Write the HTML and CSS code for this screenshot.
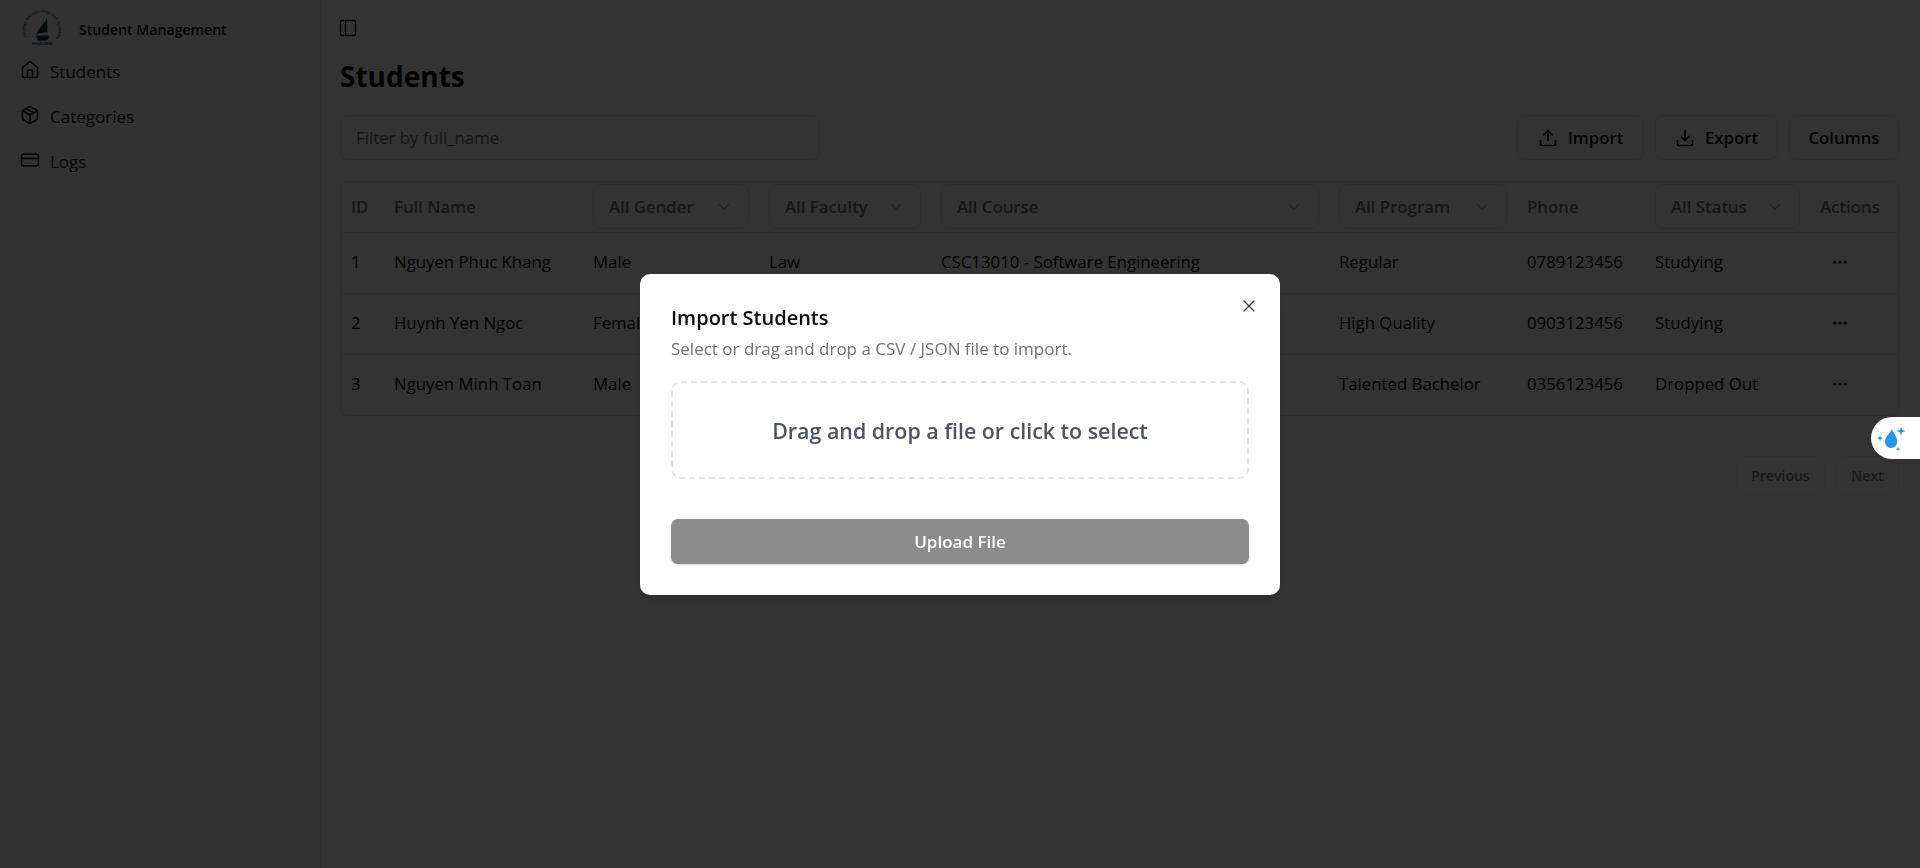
FILE: index.html
```html
<!DOCTYPE html>
<html lang="en">
<head>
<meta charset="utf-8">
<title>Student Management</title>
<link rel="stylesheet" href="styles.css">
</head>
<body>
<div class="app">
  <aside class="sidebar">
    <div class="brand">
      <svg class="logo" viewBox="0 0 44 44">
        <defs><path id="ring" d="M7.700 30.500A16.500 16.500 0 1 1 36.300 30.500"/></defs>
        <text class="logo-ring"><textPath href="#ring" startOffset="1">TRƯỜNG ĐẠI HỌC KHOA HỌC TỰ NHIÊN</textPath></text>
        <text class="logo-base" x="22" y="38" text-anchor="middle">ĐHQG-HCM</text>
        <path class="logo-sail" d="M27 11 L27.500 26 C24 25 20 26 16 27.500 C19 21 24 17 27 11Z"/>
        <path class="logo-sail" d="M16 28.500H28.500C29 31 28 33.500 26 33.500H18C17 32 16.500 30 16 28.500Z"/>
      </svg>
      <span class="brand-name">Student Management</span>
    </div>
    <nav class="nav">
      <a class="nav-item">
        <svg class="ico nav-ico" viewBox="0 0 24 24"><path d="M15 21v-8a1 1 0 0 0-1-1h-4a1 1 0 0 0-1 1v8"/><path d="M3 10a2 2 0 0 1 .709-1.528l7-5.999a2 2 0 0 1 2.582 0l7 5.999A2 2 0 0 1 21 10v9a2 2 0 0 1-2 2H5a2 2 0 0 1-2-2z"/></svg>
        Students
      </a>
      <a class="nav-item">
        <svg class="ico nav-ico" viewBox="0 0 24 24"><path d="M11 21.730a2 2 0 0 0 2 0l7-4A2 2 0 0 0 21 16V8a2 2 0 0 0-1-1.730l-7-4a2 2 0 0 0-2 0l-7 4A2 2 0 0 0 3 8v8a2 2 0 0 0 1 1.730z"/><path d="M12 22V12"/><polyline points="3.290 7 12 12 20.710 7"/><path d="m7.500 4.270 9 5.150"/></svg>
        Categories
      </a>
      <a class="nav-item">
        <svg class="ico nav-ico" viewBox="0 0 24 24"><rect width="20" height="14" x="2" y="5" rx="2"/><line x1="2" x2="22" y1="10" y2="10"/></svg>
        Logs
      </a>
    </nav>
  </aside>

  <main class="main">
    <div class="topbar">
      <svg class="ico trigger" viewBox="0 0 24 24"><rect width="18" height="18" x="3" y="3" rx="2"/><path d="M9 3v18"/></svg>
    </div>
    <h1 class="title">Students</h1>

    <div class="toolbar">
      <div class="filter">Filter by full_name</div>
      <div class="actions">
        <button class="btn import-btn"><svg class="ico btn-ico" viewBox="0 0 24 24"><path d="M21 15v4a2 2 0 0 1-2 2H5a2 2 0 0 1-2-2v-4"/><polyline points="17 8 12 3 7 8"/><line x1="12" x2="12" y1="3" y2="15"/></svg>Import</button>
        <button class="btn export-btn"><svg class="ico btn-ico" viewBox="0 0 24 24"><path d="M21 15v4a2 2 0 0 1-2 2H5a2 2 0 0 1-2-2v-4"/><polyline points="7 10 12 15 17 10"/><line x1="12" x2="12" y1="15" y2="3"/></svg>Export</button>
        <button class="btn columns-btn">Columns</button>
      </div>
    </div>

    <div class="table-wrap">
      <table class="table">
        <colgroup>
          <col class="c-id"><col class="c-name"><col class="c-gender"><col class="c-faculty"><col class="c-course"><col class="c-program"><col class="c-phone"><col class="c-status"><col class="c-actions">
        </colgroup>
        <thead>
          <tr>
            <th>ID</th>
            <th>Full Name</th>
            <th><div class="select">All Gender<svg class="ico chev" viewBox="0 0 24 24"><path d="m6 9 6 6 6-6"/></svg></div></th>
            <th><div class="select">All Faculty<svg class="ico chev" viewBox="0 0 24 24"><path d="m6 9 6 6 6-6"/></svg></div></th>
            <th><div class="select">All Course<svg class="ico chev" viewBox="0 0 24 24"><path d="m6 9 6 6 6-6"/></svg></div></th>
            <th><div class="select">All Program<svg class="ico chev" viewBox="0 0 24 24"><path d="m6 9 6 6 6-6"/></svg></div></th>
            <th>Phone</th>
            <th><div class="select">All Status<svg class="ico chev" viewBox="0 0 24 24"><path d="m6 9 6 6 6-6"/></svg></div></th>
            <th>Actions</th>
          </tr>
        </thead>
        <tbody>
          <tr>
            <td>1</td><td>Nguyen Phuc Khang</td><td>Male</td><td>Law</td><td>CSC13010 - Software Engineering</td><td>Regular</td><td>0789123456</td><td>Studying</td>
            <td><svg class="ico dots" viewBox="0 0 24 24"><circle cx="12" cy="12" r="1"/><circle cx="19" cy="12" r="1"/><circle cx="5" cy="12" r="1"/></svg></td>
          </tr>
          <tr>
            <td>2</td><td>Huynh Yen Ngoc</td><td>Female</td><td>Law</td><td>CSC13010 - Software Engineering</td><td>High Quality</td><td>0903123456</td><td>Studying</td>
            <td><svg class="ico dots" viewBox="0 0 24 24"><circle cx="12" cy="12" r="1"/><circle cx="19" cy="12" r="1"/><circle cx="5" cy="12" r="1"/></svg></td>
          </tr>
          <tr>
            <td>3</td><td>Nguyen Minh Toan</td><td>Male</td><td>Law</td><td>CSC13010 - Software Engineering</td><td>Talented Bachelor</td><td>0356123456</td><td>Dropped Out</td>
            <td><svg class="ico dots" viewBox="0 0 24 24"><circle cx="12" cy="12" r="1"/><circle cx="19" cy="12" r="1"/><circle cx="5" cy="12" r="1"/></svg></td>
          </tr>
        </tbody>
      </table>
    </div>

    <div class="pagination">
      <button class="page-btn prev">Previous</button>
      <button class="page-btn next">Next</button>
    </div>
  </main>
</div>

<div class="overlay"></div>

<div class="widget">
  <svg class="widget-ico" viewBox="0 0 34 34">
    <path d="M18 5.700C16 11 10.200 14 10.200 20.400A6.900 6.900 0 0 0 24 20.400C24 14 20 11 18 5.700Z"/>
    <path d="M28.400 3l1.300 3.700L33.400 8l-3.700 1.300L28.400 13l-1.300-3.700L23.400 8l3.700-1.300Z"/>
    <path d="M4.500 12.500l.9 2.600L8 16l-2.600.9L4.500 19.500l-.9-2.600L1 16l2.600-.9Z"/>
    <path d="M25 25.400l.7 2.300 2.300.7-2.300.7L25 31.400l-.7-2.300-2.300-.7 2.300-.7Z"/>
  </svg>
</div>

<div class="dialog">
  <svg class="ico close" viewBox="0 0 24 24"><path d="M18 6 6 18"/><path d="m6 6 12 12"/></svg>
  <h2 class="dialog-title">Import Students</h2>
  <p class="dialog-desc">Select or drag and drop a CSV / JSON file to import.</p>
  <div class="dropzone">Drag and drop a file or click to select</div>
  <button class="upload">Upload File</button>
</div>
</body>
</html>
```

FILE: styles.css
```css
* { box-sizing: border-box; }
html, body { margin: 0; height: 100%; overflow: hidden; }
body {
  background: #fff;
  color: #0a0a0a;
  font-family: "Open Sans", "Noto Sans", sans-serif;
  font-size: 16.800px;
}
.ico {
  fill: none;
  stroke: currentColor;
  stroke-width: 2;
  stroke-linecap: round;
  stroke-linejoin: round;
  flex: none;
  display: block;
}
.app { display: flex; height: 868px; }

/* sidebar */
.sidebar {
  width: 321px;
  flex: none;
  background: #fafafa;
  border-right: 1px solid #e5e5e5;
  padding: 8px 20px 0;
}
.brand { display: flex; align-items: center; gap: 15px; height: 41px; }
.logo { width: 44px; height: 44px; flex: none; overflow: visible; }
.logo-ring { font-size: 3.500px; font-weight: 600; fill: #1a2f5c; font-family: "Noto Sans", sans-serif; }
.logo-base { font-size: 3.600px; font-weight: 600; fill: #1a2f5c; font-family: "Noto Sans", sans-serif; }
.logo-sail { fill: #1a2f5c; }
.brand-name { font-size: 14.100px; font-weight: 600; margin-top: 2px; }
.nav { display: flex; flex-direction: column; }
.nav-item { display: flex; align-items: center; gap: 10px; height: 45px; color: #262626; font-size: 17px; }
.nav-ico { width: 20px; height: 20px; margin-top: -3px; }

/* main */
.main { flex: 1; min-width: 0; padding: 14px 21px 0 19px; }
.topbar { height: 28px; display: flex; align-items: center; }
.trigger { width: 20px; height: 20px; margin-left: -2px; stroke-width: 1.800; }
.title { margin: 14px 0 0; font-size: 28px; line-height: 40px; font-weight: 700; }

.toolbar { margin-top: 19px; display: flex; justify-content: space-between; }
.filter {
  width: 480px;
  height: 45px;
  border: 1px solid #e5e5e5;
  border-radius: 8px;
  padding: 0 15px;
  display: flex;
  align-items: center;
  color: #737373;
}
.actions { display: flex; gap: 11px; }
.btn {
  height: 45px;
  border: 1px solid #e5e5e5;
  border-radius: 8px;
  background: #fff;
  color: #0a0a0a;
  font: inherit;
  font-weight: 600;
  display: flex;
  align-items: center;
  justify-content: center;
  gap: 10px;
  padding: 0;
}
.import-btn { width: 127px; }
.export-btn { width: 123px; }
.columns-btn { width: 110px; }
.btn-ico { width: 20px; height: 20px; }

/* table */
.table-wrap { margin-top: 21px; border: 1px solid #e5e5e5; border-radius: 8px; overflow: hidden; }
.table { width: 100%; border-collapse: collapse; table-layout: fixed; }
.c-id { width: 43px; }
.c-name { width: 199px; }
.c-gender { width: 176px; }
.c-faculty { width: 172px; }
.c-course { width: 398px; }
.c-program { width: 188px; }
.c-phone { width: 128px; }
.c-status { width: 165px; }
.c-actions { width: 88px; }
th {
  height: 50px;
  padding: 0 10px;
  text-align: left;
  font-weight: 600;
  color: #737373;
  border-bottom: 1px solid #e5e5e5;
}
td { height: 61px; padding: 0 10px 2px; border-bottom: 1px solid #e5e5e5; white-space: nowrap; }
tbody tr:last-child td { border-bottom: 0; }
.select {
  height: 45px;
  border: 1px solid #e5e5e5;
  border-radius: 8px;
  display: flex;
  align-items: center;
  justify-content: space-between;
  padding: 0 15px;
  font-weight: 600;
}
.chev { width: 18px; height: 18px; opacity: .5; }
.dots { width: 18px; height: 18px; margin-left: 11px; }

/* pagination */
.pagination { margin-top: 40px; display: flex; justify-content: flex-end; gap: 11px; }
.page-btn {
  height: 39px;
  border: 1px solid #e5e5e5;
  border-radius: 8px;
  background: #fff;
  color: #0a0a0a;
  font: inherit;
  font-size: 14px;
  font-weight: 600;
  opacity: .5;
  padding: 0;
}
.prev { width: 89px; }
.next { width: 63px; }

/* modal layer */
.overlay { position: fixed; inset: 0; background: rgba(0, 0, 0, .8); }
.widget {
  position: fixed;
  top: 417px;
  right: 0;
  width: 49px;
  height: 42px;
  background: #fff;
  border-radius: 21px 0 0 21px;
  padding: 7px 0 0 5px;
}
.widget-ico { width: 30px; height: 30px; display: block; fill: #2196f3; }
.dialog {
  position: fixed;
  left: 640px;
  top: 274px;
  width: 640px;
  height: 321px;
  background: #fff;
  border-radius: 10px;
  padding: 29px 31px 0;
  box-shadow: 0 10px 15px -3px rgba(0, 0, 0, .1);
}
.close { position: absolute; top: 22px; right: 21px; width: 20px; height: 20px; color: #3f3f46; stroke-width: 1.500; }
.dialog-title { margin: 0; font-size: 20px; line-height: 30px; font-weight: 600; color: #0a0a0a; }
.dialog-desc { margin: 4px 0 0; font-size: 17px; line-height: 24px; color: #737373; }
.dropzone {
  margin-top: 20px;
  height: 98px;
  width: 578px;
  border: 2px dashed #e5e5e5;
  border-radius: 10px;
  display: flex;
  align-items: center;
  justify-content: center;
  font-size: 21.400px;
  font-weight: 600;
  color: #4b5563;
}
.upload {
  display: block;
  margin-top: 40px;
  width: 578px;
  height: 45px;
  border: 0;
  border-radius: 7px;
  background: #8b8b8c;
  color: #fff;
  font: inherit;
  font-size: 17px;
  font-weight: 600;
  box-shadow: 0 1px 2px rgba(0, 0, 0, .15);
}
```
